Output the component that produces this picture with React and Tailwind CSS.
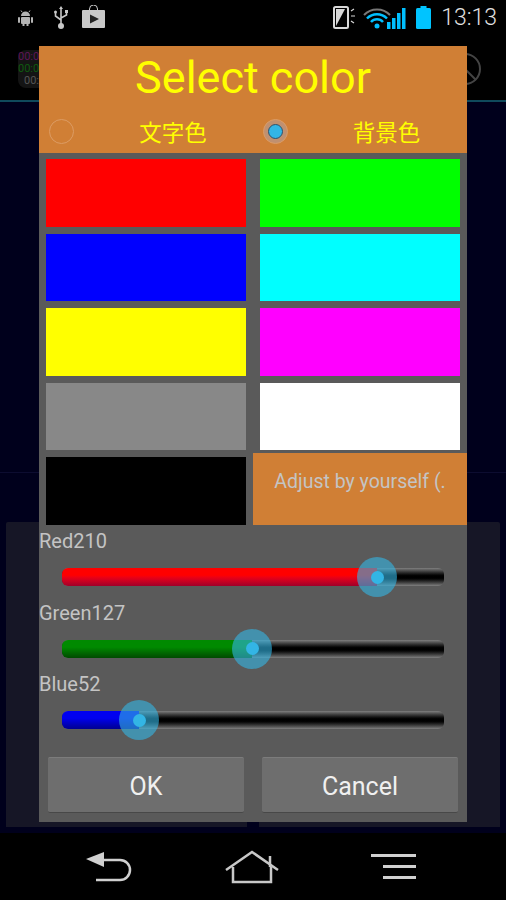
const font = { fontFamily: 'Roboto, "Noto Sans CJK JP", sans-serif' };

const swatches = [
  'bg-[#ff0000]', 'bg-[#00ff00]',
  'bg-[#0000ff]', 'bg-[#00ffff]',
  'bg-[#ffff00]', 'bg-[#ff00ff]',
  'bg-[#888888]', 'bg-[#ffffff]',
  'bg-[#000000]',
];

const sliders = [
  { label: 'Red210', value: 315, fill: 'bg-linear-to-b from-[#ff0000] from-40% to-[#a00028]' },
  { label: 'Green127', value: 190, fill: 'bg-linear-to-b from-[#008a00] from-40% to-[#004a00]' },
  { label: 'Blue52', value: 77, fill: 'bg-linear-to-b from-[#0000f0] from-40% to-[#000090]' },
];

function Slider({ label, value, fill }) {
  return (
    <div className="h-[71.500px]">
      <div className="h-[36px] text-[20px] leading-[36px] text-[#c4c4c4]">{label}</div>
      <div className="relative ml-[23px] mt-[9px] h-[18px] w-[382px] rounded-[6px] bg-linear-to-b from-[#808080] via-[#000000] to-[#808080]">
        <div className={`h-full rounded-l-[6px] ${fill}`} style={{ width: value }} />
        <div
          className="absolute top-1/2 flex h-[40px] w-[40px] -translate-x-1/2 -translate-y-1/2 items-center justify-center rounded-full bg-[#33b5e5]/60"
          style={{ left: value }}
        >
          <div className="h-[13px] w-[13px] rounded-full bg-[#33b5e5]" />
        </div>
      </div>
    </div>
  );
}

function Radio({ checked }) {
  return (
    <div className={`flex h-[25px] w-[25px] shrink-0 items-center justify-center rounded-full border border-[#dc9c64] ${checked ? 'bg-[#c09070]' : ''}`}>
      {checked && <div className="h-[15px] w-[15px] rounded-full border border-[#30506a] bg-[#33b5e5]" />}
    </div>
  );
}

function StatusIcons() {
  return (
    <div className="flex h-[35px] items-center bg-black pl-[17px] pr-[9px]">
      <svg width="17" height="16" viewBox="0 0 17 16" className="mr-[19px]" fill="#b4b4b4">
        <path d="M4 6a4.5 4.5 0 0 1 9 0z" />
        <path d="M5 2 4 .5M12 2l1-1.500" stroke="#b4b4b4" />
        <rect x="4" y="7" width="9" height="7" rx="1" />
        <rect x="1" y="7" width="2" height="6" rx="1" />
        <rect x="14" y="7" width="2" height="6" rx="1" />
        <rect x="5.500" y="13" width="2" height="3" />
        <rect x="9.500" y="13" width="2" height="3" />
      </svg>
      <svg width="16" height="23" viewBox="0 0 16 23" className="mr-[13px]" fill="none" stroke="#c8c8c8" strokeWidth="1.600">
        <path d="M8 2v16M8 14 2.500 10V7M8 12l5.500-3V6" />
        <path d="M8 0 6 3h4z" fill="#c8c8c8" stroke="none" />
        <circle cx="2.500" cy="6" r="1.500" fill="#c8c8c8" stroke="none" />
        <rect x="12" y="4" width="3" height="3" fill="#c8c8c8" stroke="none" />
        <circle cx="8" cy="20" r="3" fill="#c8c8c8" stroke="none" />
      </svg>
      <svg width="23" height="23" viewBox="0 0 23 23" className="-mt-[2px]">
        <path d="M7.500 5V4a4 4 0 0 1 8 0v1" fill="none" stroke="#c8c8c8" strokeWidth="1" />
        <rect y="5" width="23" height="18" rx="1" fill="#c8c8c8" />
        <path d="M8 9.500 17 14l-9 4.500z" fill="#222222" />
      </svg>
      <div className="flex-1" />
      <svg width="23" height="24" viewBox="0 0 23 24" className="mr-[7px]">
        <rect x="1" y="1" width="14" height="21" rx="1.500" fill="none" stroke="#d8d8d8" strokeWidth="2" />
        <path d="M3 20 12 3H3z" fill="#d8d8d8" />
        <path d="M18 5l3-2M18 10h4M18 15l3 2" stroke="#d8d8d8" strokeWidth="1.200" />
      </svg>
      <svg width="44" height="22" viewBox="0 0 44 22" className="mr-[9px]" fill="none">
        <path d="M1 8a18 18 0 0 1 26 0" stroke="#777777" strokeWidth="2" />
        <path d="M4 11.500a14 14 0 0 1 20 0M8 15a8 8 0 0 1 12 0" stroke="#00bfff" strokeWidth="2.500" />
        <circle cx="14" cy="19" r="2.500" fill="#00bfff" />
        <rect x="24" y="15" width="3.500" height="7" fill="#00bfff" />
        <rect x="29" y="11" width="3.500" height="11" fill="#00bfff" />
        <rect x="34" y="6" width="3.500" height="16" fill="#00bfff" />
        <rect x="39" y="1" width="3.500" height="21" fill="#00bfff" />
      </svg>
      <svg width="15" height="23" viewBox="0 0 15 23" className="mr-[10px]" fill="#00c4ff">
        <rect x="4.500" width="6" height="3" />
        <rect y="2" width="15" height="21" rx="1.500" />
      </svg>
      <span className="w-[56px] text-right text-[23px] leading-none font-light text-[#e0e0e0]">13:13</span>
    </div>
  );
}

function NavBar() {
  return (
    <div className="flex h-[67px] items-start bg-black">
      <svg width="46" height="32" viewBox="0 0 46 32" className="ml-[86px] mt-[18px]" fill="none">
        <path d="M0 8 18 1v5h-0l0 10z" fill="#d0d0d0" />
        <path d="M16 9h18a10 10 0 0 1 10 10v0a10 10 0 0 1-10 10H10" stroke="#d0d0d0" strokeWidth="2.500" />
      </svg>
      <svg width="54" height="34" viewBox="0 0 54 34" className="ml-[93px] mt-[17px]" fill="none" stroke="#c8c8c8" strokeWidth="2.500">
        <path d="M1 20 27 2l26 18" />
        <path d="M8 17v15h38V17M45 6v11" />
      </svg>
      <div className="ml-[92px] mt-[21px] flex w-[45px] flex-col items-end gap-[8px]">
        <div className="h-[3px] w-[45px] bg-[#d0d0d0]" />
        <div className="h-[3px] w-[33px] bg-[#d0d0d0]" />
        <div className="h-[3px] w-[33px] bg-[#d0d0d0]" />
      </div>
    </div>
  );
}

export default function App() {
  return (
    <div className="relative flex h-[900px] w-[506px] flex-col overflow-hidden bg-black" style={font}>
      <StatusIcons />

      {/* dimmed screen behind the dialog */}
      <div className="relative h-[65px] bg-black">
        <div className="absolute left-[18px] top-[15px] h-[38px] w-[30px] rounded-[8px] bg-[#141414] pt-[1px] text-[11px] leading-[12px]">
          <div className="text-[#5e1458]">00:0</div>
          <div className="text-[#0f5a0f]">00:0</div>
          <div className="pl-[6px] text-[#555555]">00:0</div>
        </div>
        <svg width="32" height="32" viewBox="0 0 32 32" className="absolute left-[449px] top-[18px]" fill="none" stroke="#444444" strokeWidth="2">
          <circle cx="16" cy="16" r="15" />
          <path d="M5 5l22 22" />
        </svg>
      </div>
      <div className="h-[2px] bg-[#0f4a5c]" />
      <div className="flex flex-1 flex-col bg-[#00001c]">
        <div className="h-[371px] border-b border-[#0c0c30]" />
        <div className="relative mx-[6px] mt-[49px] h-[305px] rounded-t-[2px] bg-[#161626]">
          <div className="absolute bottom-0 left-[241px] h-[5px] w-[12px] bg-[#00001c]" />
        </div>
      </div>
      <NavBar />

      {/* dialog */}
      <div className="absolute left-[39px] top-[46px] h-[776px] w-[428px] bg-[#5a5a5a]">
        <div className="h-[107px] bg-[#d07f35] text-[#ffff00]">
          <div className="h-[65px] text-center text-[45px] leading-[64px]">Select color</div>
          <div className="flex items-center pl-[10px] pt-[4px]">
            <Radio />
            <div className="mt-[3px] w-[189px] shrink-0 pl-[9px] text-center text-[22.500px] leading-[30px]">文字色</div>
            <Radio checked />
            <div className="mt-[3px] w-[180px] shrink-0 pl-[17px] text-center text-[22.500px] leading-[30px]">背景色</div>
          </div>
        </div>

        <div className="mt-[6px] grid grid-cols-[200px_200px] gap-x-[14px] gap-y-[7px] px-[7px]">
          {swatches.map((c) => (
            <div key={c} className={`h-[67.500px] ${c}`} />
          ))}
          <div className="-mx-[7px] -mt-[4px] flex h-[71.500px] items-start justify-center bg-[#d07f35] pt-[14px] text-[19.500px] leading-[30px] text-[#c4c4c4]">
            Adjust by yourself (.
          </div>
        </div>

        <div className="-mt-[1.500px]">
          {sliders.map((s) => (
            <Slider key={s.label} {...s} />
          ))}
        </div>

        <div className="mt-[19.500px] flex gap-[18px] px-[9px]">
          <button className="h-[56px] w-[196px] rounded-[2px] border-t border-b border-t-[#7c7c7c] border-b-[#484848] bg-[#6e6e6e] pt-[3px] text-[25px] text-[#f0f0f0]">OK</button>
          <button className="h-[56px] w-[196px] rounded-[2px] border-t border-b border-t-[#7c7c7c] border-b-[#484848] bg-[#6e6e6e] pt-[3px] text-[25px] text-[#f0f0f0]">Cancel</button>
        </div>
      </div>
    </div>
  );
}
